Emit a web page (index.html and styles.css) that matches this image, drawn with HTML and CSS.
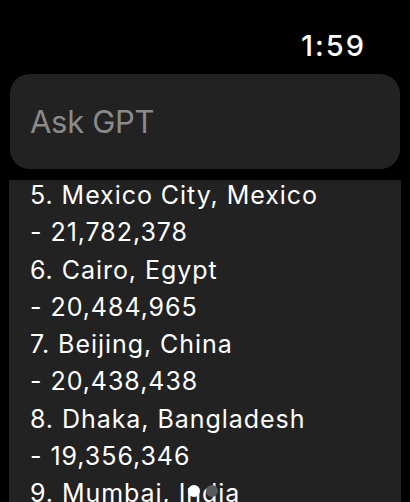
FILE: index.html
```html
<!DOCTYPE html>
<html>
<head>
<meta charset="utf-8">
<link rel="stylesheet" href="styles.css">
</head>
<body>
<div class="screen">
  <div class="status"><span class="time">1:59</span></div>
  <div class="ask"><span class="placeholder">Ask GPT</span></div>
  <div class="list">
    <div class="lines">
      <div class="line">5. Mexico City, Mexico</div>
      <div class="line">- 21,782,378</div>
      <div class="line">6. Cairo, Egypt</div>
      <div class="line">- 20,484,965</div>
      <div class="line">7. Beijing, China</div>
      <div class="line">- 20,438,438</div>
      <div class="line">8. Dhaka, Bangladesh</div>
      <div class="line">- 19,356,346</div>
      <div class="line">9. Mumbai, India</div>
    </div>
  </div>
  <div class="pager"><span class="dot active"></span><span class="dot"></span></div>
</div>
</body>
</html>
```
FILE: styles.css
```css
html, body {
  margin: 0;
  padding: 0;
  background: #000;
  width: 410px;
  height: 502px;
  overflow: hidden;
}
.screen {
  position: relative;
  width: 410px;
  height: 502px;
  font-family: Inter, "Noto Sans", sans-serif;
  color: #fff;
  display: flex;
  flex-direction: column;
}
.status {
  height: 74px;
  display: flex;
  justify-content: flex-end;
  align-items: flex-start;
  padding-right: 44px;
  box-sizing: border-box;
}
.time {
  font-size: 29px;
  font-weight: 500;
  line-height: 1;
  margin-top: 31px;
  letter-spacing: 2px;
}
.ask {
  margin: 0 10px;
  height: 95px;
  border-radius: 20px;
  background: #222222;
  display: flex;
  align-items: center;
  padding-left: 20px;
}
.placeholder {
  font-size: 31px;
  color: #8a8a8a;
  line-height: 1;
  letter-spacing: -0.3px;
}
.list {
  margin: 11px 9px 0;
  background: #222222;
  flex: 1;
  overflow: hidden;
  padding-left: 21px;
}
.lines {
  margin-top: -3px;
}
.line {
  font-size: 25px;
  line-height: 37.3px;
  letter-spacing: 0.95px;
  white-space: nowrap;
}
.pager {
  position: absolute;
  left: 188px;
  top: 485px;
  display: flex;
  gap: 6px;
}
.dot {
  width: 12px;
  height: 12px;
  border-radius: 50%;
  background: #5a5a5a;
}
.dot.active {
  background: #fff;
}
```
